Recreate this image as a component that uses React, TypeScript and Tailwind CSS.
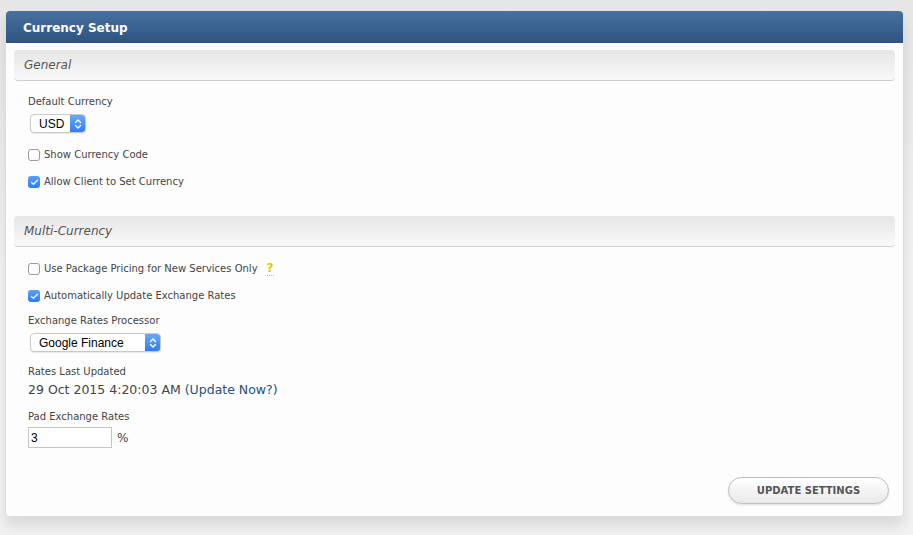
import { Check } from 'lucide-react';

function Stepper() {
  return (
    <svg width="8" height="12" viewBox="0 0 8 12" fill="none" stroke="white" strokeWidth="1.4" strokeLinecap="round" strokeLinejoin="round">
      <path d="M1.5 4.5 L4 2 L6.5 4.5" />
      <path d="M1.5 7.5 L4 10 L6.5 7.5" />
    </svg>
  );
}

function MacSelect({ value, width }: { value: string; width: string }) {
  return (
    <div className={`flex h-[19px] ${width} rounded-[4px] border border-[#c8c8c8] bg-white shadow-[0_1px_1px_rgba(0,0,0,0.08)] overflow-hidden`}>
      <div className="flex-1 flex items-center pl-[8px] text-[12px] text-black font-['Liberation_Sans',sans-serif]">{value}</div>
      <div className="w-[15px] bg-gradient-to-b from-[#6aa8fb] to-[#2f7cf4] flex items-center justify-center">
        <Stepper />
      </div>
    </div>
  );
}

function Checkbox({ checked, label }: { checked?: boolean; label: string }) {
  return (
    <label className="flex items-center gap-[4px] h-[14px]">
      {checked ? (
        <span className="w-[12px] h-[12px] rounded-[3px] bg-gradient-to-b from-[#5aa0fa] to-[#2e7ef2] flex items-center justify-center">
          <Check className="w-[9px] h-[9px] text-white" strokeWidth={3.5} />
        </span>
      ) : (
        <span className="w-[12px] h-[12px] rounded-[3px] border border-[#9a9a9a] bg-white" />
      )}
      <span>{label}</span>
    </label>
  );
}

function SectionHeader({ title }: { title: string }) {
  return (
    <div className="h-[31px] mx-[8px] rounded-[4px] bg-gradient-to-b from-[#e6e6e6] to-[#f9f9f9] border-b border-[#cfcfcf] flex items-center pl-[10px] text-[12px] italic text-[#555]">
      {title}
    </div>
  );
}

export default function App() {
  return (
    <div className="min-h-[535px] bg-gradient-to-b from-[#e6e6e6] via-[#f3f3f3] to-[#f3f3f3] pt-[11px] px-[5px] pb-[19px] font-['DejaVu_Sans',Verdana,sans-serif] text-[10px] leading-[14px] text-[#444]">
      <div className="w-[899px] bg-[#fdfdfd] border border-[#dcdcdc] border-t-0 rounded-[4px] shadow-[0_10px_14px_rgba(0,0,0,0.10)]">
        {/* Header */}
        <div className="h-[32px] rounded-t-[4px] bg-gradient-to-b from-[#48729e] to-[#2d5283] flex items-center pl-[17px] pt-[2px]">
          <h1 className="text-white font-bold text-[12px]">Currency Setup</h1>
        </div>

        <div className="pt-[7px]">
          {/* General */}
          <SectionHeader title="General" />
          <div className="px-[22px] pt-[14px] pb-[27px]">
            <div className="mb-[5px]">Default Currency</div>
            <div className="pl-[2px]">
              <MacSelect value="USD" width="w-[56px]" />
            </div>
            <div className="mt-[15px]">
              <Checkbox label="Show Currency Code" />
            </div>
            <div className="mt-[13px]">
              <Checkbox checked label="Allow Client to Set Currency" />
            </div>
          </div>

          {/* Multi-Currency */}
          <SectionHeader title="Multi-Currency" />
          <div className="px-[22px] pt-[15px] pb-[29px]">
            <div className="flex items-center">
              <Checkbox label="Use Package Pricing for New Services Only" />
              <span className="ml-[9px] text-[#e2c800] font-bold text-[12px] leading-[13px] border-b border-dotted border-[#e2c800]">?</span>
            </div>
            <div className="mt-[13px]">
              <Checkbox checked label="Automatically Update Exchange Rates" />
            </div>
            <div className="mt-[11px] mb-[5px]">Exchange Rates Processor</div>
            <div className="pl-[2px]">
              <MacSelect value="Google Finance" width="w-[131px]" />
            </div>
            <div className="mt-[13px]">Rates Last Updated</div>
            <div className="mt-[3px] text-[12.5px] leading-[16px]">
              29 Oct 2015 4:20:03 AM <span className="text-[#25507f]">(Update Now?)</span>
            </div>
            <div className="mt-[12px] mb-[3px]">Pad Exchange Rates</div>
            <div className="flex items-center gap-[5px]">
              <input
                defaultValue="3"
                className="w-[84px] h-[21px] border border-[#c4c4c4] bg-white px-[2px] text-[12px] text-black font-['Liberation_Sans',sans-serif] outline-none"
              />
              <span className="text-[12px]">%</span>
            </div>
          </div>

          <div className="flex justify-end pr-[14px] pb-[12px]">
            <button className="w-[161px] h-[27px] rounded-full border border-[#bdbdbd] bg-gradient-to-b from-[#ffffff] to-[#e9e9e9] text-[10px] font-bold text-[#555] shadow-[0_1px_2px_rgba(0,0,0,0.12)]">
              UPDATE SETTINGS
            </button>
          </div>
        </div>
      </div>
    </div>
  );
}
